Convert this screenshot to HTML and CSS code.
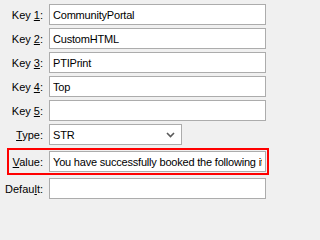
FILE: index.html
```html
<!DOCTYPE html>
<html>
<head>
<meta charset="utf-8">
<link rel="stylesheet" href="styles.css">
</head>
<body>
<div class="form">
  <div class="row"><label class="lbl">Key <u>1</u>:</label><input class="field" value="CommunityPortal"></div>
  <div class="row"><label class="lbl">Key <u>2</u>:</label><input class="field" value="CustomHTML"></div>
  <div class="row"><label class="lbl">Key <u>3</u>:</label><input class="field" value="PTIPrint"></div>
  <div class="row"><label class="lbl">Key <u>4</u>:</label><input class="field" value="Top"></div>
  <div class="row"><label class="lbl">Key <u>5</u>:</label><input class="field" value=""></div>
  <div class="row"><label class="lbl"><u>T</u>ype:</label>
    <div class="select"><span class="select-text">STR</span>
      <svg class="chev" width="9" height="6" viewBox="0 0 9 6"><path d="M1 1 L4.5 4.5 L8 1" fill="none" stroke="#5a5a5a" stroke-width="1.6"/></svg>
    </div>
  </div>
  <div class="row highlight"><label class="lbl"><u>V</u>alue:</label><input class="field" value="You have successfully booked the following items:"></div>
  <div class="row"><label class="lbl">Defau<u>l</u>t:</label><input class="field" value=""></div>
</div>
</body>
</html>
```
FILE: styles.css
```css
html, body {
  margin: 0;
  padding: 0;
  background: #f0f0f0;
}
body {
  font-family: "Liberation Sans", Arial, sans-serif;
  font-size: 11px;
  color: #000;
  width: 271px;
  height: 202px;
  overflow: hidden;
}
.form {
  display: flex;
  flex-direction: column;
  gap: 3px;
  padding: 4px 5px 0 0;
}
.row {
  display: flex;
  align-items: center;
  gap: 6px;
  height: 21px;
}
.lbl {
  width: 43px;
  flex: none;
  text-align: right;
  white-space: nowrap;
}
.field {
  flex: 1;
  min-width: 0;
  box-sizing: border-box;
  height: 21px;
  margin: 0;
  border: 1px solid #acacac;
  background: #fff;
  padding: 0 3px;
  font-family: "Liberation Sans", Arial, sans-serif;
  font-size: 11px;
  letter-spacing: -0.2px;
  color: #000;
  outline: none;
}
.select {
  box-sizing: border-box;
  width: 133px;
  height: 21px;
  border: 1px solid #acacac;
  background: #fff;
  display: flex;
  align-items: center;
  justify-content: space-between;
  padding: 0 6px 0 3px;
  letter-spacing: -0.2px;
}
.chev {
  display: block;
}
.highlight {
  height: 27px;
  box-sizing: border-box;
  border: 2px solid #f00;
  padding: 1px 1px 1px 0;
  margin: 0 -3px 0 7px;
}
.highlight .lbl {
  width: 34px;
}
```
